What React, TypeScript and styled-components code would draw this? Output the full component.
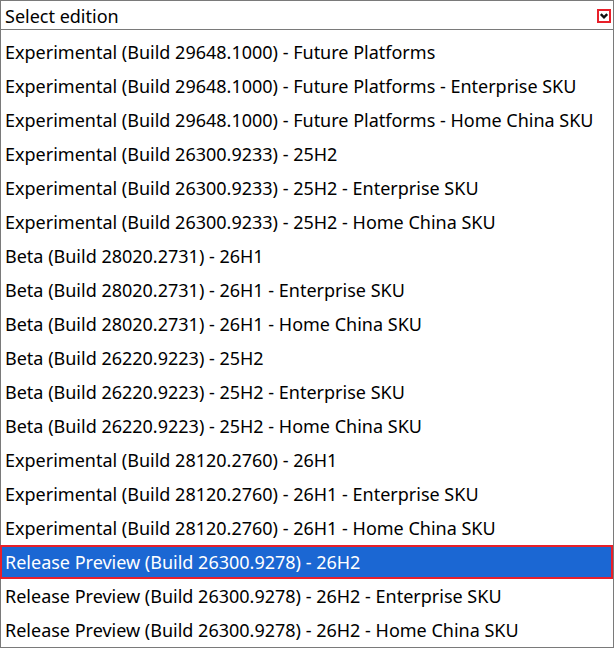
import React from 'react';
import styled, { createGlobalStyle } from 'styled-components';

const GlobalStyle = createGlobalStyle`
    html, body {
        margin: 0;
        padding: 0;
        background: #ffffff;
    }
    body {
        font-family: "Noto Sans", "Open Sans", sans-serif;
        color: #000000;
    }
`;

const editions = [
    'Experimental (Build 29648.1000) - Future Platforms',
    'Experimental (Build 29648.1000) - Future Platforms - Enterprise SKU',
    'Experimental (Build 29648.1000) - Future Platforms - Home China SKU',
    'Experimental (Build 26300.9233) - 25H2',
    'Experimental (Build 26300.9233) - 25H2 - Enterprise SKU',
    'Experimental (Build 26300.9233) - 25H2 - Home China SKU',
    'Beta (Build 28020.2731) - 26H1',
    'Beta (Build 28020.2731) - 26H1 - Enterprise SKU',
    'Beta (Build 28020.2731) - 26H1 - Home China SKU',
    'Beta (Build 26220.9223) - 25H2',
    'Beta (Build 26220.9223) - 25H2 - Enterprise SKU',
    'Beta (Build 26220.9223) - 25H2 - Home China SKU',
    'Experimental (Build 28120.2760) - 26H1',
    'Experimental (Build 28120.2760) - 26H1 - Enterprise SKU',
    'Experimental (Build 28120.2760) - 26H1 - Home China SKU',
    'Release Preview (Build 26300.9278) - 26H2',
    'Release Preview (Build 26300.9278) - 26H2 - Enterprise SKU',
    'Release Preview (Build 26300.9278) - 26H2 - Home China SKU',
];

const Dropdown = styled.div`
    width: 614px;
`;

const SelectBox = styled.div`
    box-sizing: border-box;
    height: 30px;
    display: flex;
    align-items: center;
    justify-content: space-between;
    padding: 1px 2px 0 4px;
    border: 1px solid #7a7a7a;
    font-size: 18px;
`;

const List = styled.ul`
    list-style: none;
    margin: 0;
    padding: 5px 0 0;
    border: 1px solid #7a7a7a;
    border-top: none;
`;

const Option = styled.li<{ $selected?: boolean }>`
    box-sizing: border-box;
    height: 34px;
    display: flex;
    align-items: center;
    padding-left: 4px;
    font-size: 18px;
    white-space: nowrap;
    ${p => p.$selected && `
        margin-left: -1px;
        padding-left: 5px;
        background: #1b67d3;
        color: #ffffff;
        box-shadow: inset 0 0 0 2px #e8202a;
    `}
`;

const ArrowIcon = () => (
    <svg width="14" height="14" viewBox="0 0 14 14">
        <rect x="1" y="1" width="12" height="12" fill="#ffffff" stroke="#e8202a" strokeWidth="2" />
        <path d="M3.8 5.2 L7 8.4 L10.2 5.2" fill="none" stroke="#111111" strokeWidth="2.4" />
    </svg>
);

export default function App() {
    const selected = 15;

    return (
        <>
            <GlobalStyle />
            <Dropdown>
                <SelectBox>
                    <span>Select edition</span>
                    <ArrowIcon />
                </SelectBox>
                <List>
                    {editions.map((name, i) => (
                        <Option key={name} $selected={i === selected}>{name}</Option>
                    ))}
                </List>
            </Dropdown>
        </>
    );
}
